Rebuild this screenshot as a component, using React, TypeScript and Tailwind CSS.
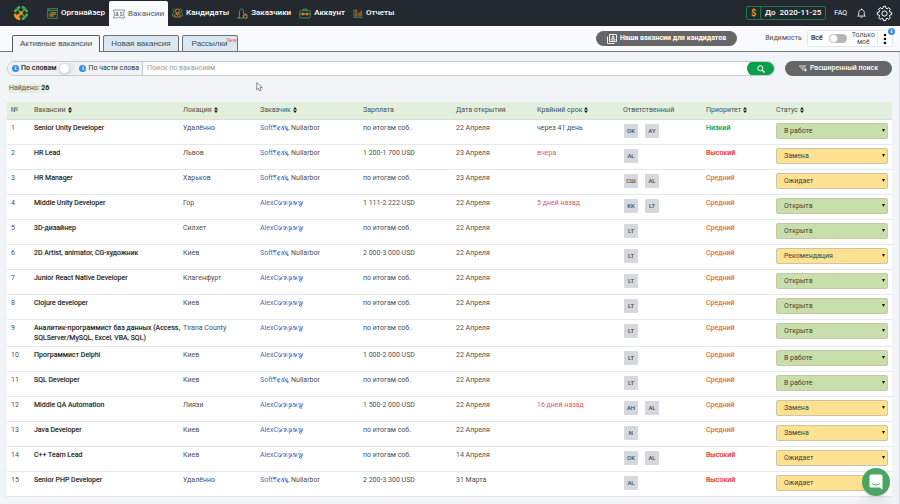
import { useState } from "react";
import type { ReactNode } from "react";

type Status = "В работе" | "Замена" | "Ожидает" | "Открыта" | "Рекомендация";
type Priority = "Низкий" | "Средний" | "Высокий";

type Vacancy = {
  title: string;
  location: string;
  client: "soft" | "alex";
  salary?: string;
  opened: string;
  deadline?: string;
  late?: boolean;
  people: string[];
  priority: Priority;
  status: Status;
};

const vacancies: Vacancy[] = [
  { title: "Senior Unity Developer", location: "Удалённо", client: "soft", opened: "22 Апреля", deadline: "через 41 день", people: ["OK", "AY"], priority: "Низкий", status: "В работе" },
  { title: "HR Lead", location: "Львов", client: "soft", salary: "1 200-1 700 USD", opened: "23 Апреля", deadline: "вчера", late: true, people: ["AL"], priority: "Высокий", status: "Замена" },
  { title: "HR Manager", location: "Харьков", client: "soft", opened: "23 Апреля", people: ["СШ", "AL"], priority: "Средний", status: "Ожидает" },
  { title: "Middle Unity Developer", location: "Гор", client: "alex", salary: "1 111-2 222 USD", opened: "22 Апреля", deadline: "5 дней назад", late: true, people: ["KK", "LT"], priority: "Средний", status: "Открыта" },
  { title: "3D-дизайнер", location: "Силхет", client: "alex", opened: "22 Апреля", people: ["LT"], priority: "Средний", status: "Открыта" },
  { title: "2D Artist, animator, CG-художник", location: "Киев", client: "soft", salary: "2 000-3 000 USD", opened: "22 Апреля", people: ["LT"], priority: "Средний", status: "Рекомендация" },
  { title: "Junior React Native Developer", location: "Клагенфурт", client: "alex", opened: "22 Апреля", people: ["LT"], priority: "Средний", status: "Открыта" },
  { title: "Clojure developer", location: "Киев", client: "alex", opened: "22 Апреля", people: ["LT"], priority: "Средний", status: "Открыта" },
  { title: "Аналитик-программист баз данных (Access, SQLServer/MySQL, Excel, VBA, SQL)", location: "Tirana County", client: "alex", opened: "22 Апреля", people: ["LT"], priority: "Средний", status: "Открыта" },
  { title: "Программист Delphi", location: "Киев", client: "alex", salary: "1 000-2 000 USD", opened: "22 Апреля", people: ["LT"], priority: "Средний", status: "В работе" },
  { title: "SQL Developer", location: "Киев", client: "soft", opened: "22 Апреля", people: ["LT"], priority: "Средний", status: "В работе" },
  { title: "Middle QA Automation", location: "Лиязи", client: "alex", salary: "1 500-2 000 USD", opened: "22 Апреля", deadline: "16 дней назад", late: true, people: ["AH", "AL"], priority: "Средний", status: "Замена" },
  { title: "Java Developer", location: "Киев", client: "alex", opened: "22 Апреля", people: ["N"], priority: "Средний", status: "Замена" },
  { title: "C++ Team Lead", location: "Киев", client: "alex", opened: "14 Апреля", people: ["OK", "AL"], priority: "Высокий", status: "Ожидает" },
  { title: "Senior PHP Developer", location: "Удалённо", client: "soft", salary: "2 200-3 300 USD", opened: "31 Марта", people: ["AL"], priority: "Высокий", status: "Ожидает" },
];

const statuses: Status[] = ["В работе", "Замена", "Ожидает", "Открыта", "Рекомендация"];

const statusColor: Record<Status, string> = {
  "В работе": "bg-[#c8dfac]",
  Открыта: "bg-[#c8dfac]",
  Замена: "bg-[#fee191]",
  Ожидает: "bg-[#fee191]",
  Рекомендация: "bg-[#fee191]",
};

const priorityColor: Record<Priority, string> = {
  Низкий: "text-[#0a9c4a] text-shadow-[0_0_1px_#6cc795]",
  Средний: "text-[#dc6c38] text-shadow-[0_0_1px_#f0b898]",
  Высокий: "text-[#f02a20] text-shadow-[0_0_1px_#f78a84]",
};

const columns = [
  { name: "№", width: "w-[23px]" },
  { name: "Вакансии", width: "w-[149px]", sortable: true },
  { name: "Локация", width: "w-[77px]", sortable: true },
  { name: "Заказчик", width: "w-[103px]", sortable: true },
  { name: "Зарплата", width: "w-[93px]" },
  { name: "Дата открытия", width: "w-[81px]" },
  { name: "Крайний срок", width: "w-[86px]", sortable: true },
  { name: "Ответственный", width: "w-[83px]" },
  { name: "Приоритет", width: "w-[70px]", sortable: true },
  { name: "Статус", width: "w-[120px]", sortable: true },
];

function Logo() {
  return (
    <svg viewBox="0 0 32 32" className="size-4" fill="none">
      <g stroke="#45b04f" strokeWidth="5">
        <path d="M17.500 4A12 12 0 0 1 23.500 7M25 8.500A12 12 0 0 1 28 14.500" />
        <path d="M28 17.500A12 12 0 0 1 25 23.500M23.500 25A12 12 0 0 1 17.500 28" />
        <path d="M4 14.500A12 12 0 0 1 7 8.500M8.500 7A12 12 0 0 1 14.500 4" />
      </g>
      <path d="M14.500 28A12 12 0 0 1 4 17.500" stroke="#f7941d" strokeWidth="5" />
      <path d="M7 7l6 6M25 7l-6 6M25 25l-6-6" stroke="#45b04f" strokeWidth="3" />
      <path d="M7 25l6-6" stroke="#f7941d" strokeWidth="6" />
      <circle cx="16" cy="16" r="4" fill="#f7941d" />
    </svg>
  );
}

function OrganizerIcon() {
  return (
    <svg viewBox="0 0 22 22" className="h-[11px] w-[11px]" fill="none" strokeWidth="1.600">
      <rect x="1.500" y="1.500" width="19" height="19" stroke="#3c8f45" strokeWidth="2" />
      <path d="M1.500 5h19" stroke="#3c8f45" strokeWidth="2" />
      <path d="M8 9h10M4 12.500h14M4 16h10M8 8v9M12 8v9M16 8v6" stroke="#b87a30" strokeWidth="1.800" />
    </svg>
  );
}

function VacancyIcon() {
  return (
    <svg viewBox="0 0 24 20" className="h-[10px] w-3" fill="none" stroke="#70767c" strokeWidth="1.500">
      <path d="M1 2h22v2.500l-1.500 1v9l1.500 1V18h-7l-1.500-1.500h-5L8 18H1v-2.500l1.500-1v-9L1 4.500z" />
      <circle cx="8" cy="8" r="1.800" />
      <path d="M5 13c0-3 6-3 6 0zM14 7h5M14 10h5M14 13h5" />
    </svg>
  );
}

function CandidatesIcon() {
  return (
    <svg viewBox="0 0 22 20" className="h-[10px] w-[11px]" fill="none" strokeWidth="1.700">
      <path d="M5 8a3 3 0 1 1 2-5M17 8a3 3 0 1 0-2-5M5 9c-3 0-4 3-4 7h4M17 9c3 0 4 3 4 7h-4" stroke="#3f9a48" />
      <circle cx="11" cy="6" r="4" stroke="#e08d2c" />
      <path d="M5 18c0-5 2-7 6-7s6 2 6 7zM9 12l2 3 2-3" stroke="#e08d2c" />
    </svg>
  );
}

function ClientsIcon() {
  return (
    <svg viewBox="0 0 22 22" className="h-[11px] w-[11px]" fill="none" strokeWidth="1.800">
      <path d="M1 20h4V8c0-4 1.500-6 4-6s4 2 4 6v4" stroke="#3f9a48" strokeWidth="2" />
      <path d="M1 20h11" stroke="#3f9a48" strokeWidth="2" />
      <path d="M13 14h7v6h-7zM15 14c0-4 3-4 3 0" stroke="#e08d2c" />
    </svg>
  );
}

function AccountIcon() {
  return (
    <svg viewBox="0 0 24 22" className="h-[11px] w-3" fill="none" strokeWidth="1.800">
      <path d="M8 5V2h8v3" stroke="#3f9a48" />
      <rect x="1.500" y="5" width="21" height="15" rx="3" stroke="#3f9a48" />
      <path d="M3 12h18" stroke="#e08d2c" />
      <circle cx="8" cy="12" r="2.200" stroke="#e08d2c" />
      <circle cx="16" cy="12" r="2.200" stroke="#e08d2c" />
    </svg>
  );
}

function ReportsIcon() {
  return (
    <svg viewBox="0 0 22 22" className="h-[11px] w-[10px]" fill="none" strokeWidth="1.700">
      <path d="M2 2v18h19" stroke="#3f9a48" />
      <path d="M5 17V3h3v14zM11 17v-7h3v7zM17 17V6h2v11z" stroke="#b8722a" />
    </svg>
  );
}

function BellIcon() {
  return (
    <svg viewBox="0 0 16 18" className="h-[10px] w-[9px]" fill="none" stroke="#fff" strokeWidth="1.500">
      <path d="M8 1v2M3 13V8.500C3 5 5 3 8 3s5 2 5 5.500V13l2 1.500H1zM6.500 16.500h3" />
    </svg>
  );
}

function GearIcon() {
  return (
    <svg viewBox="0 0 24 26" className="size-[17px]" fill="none" stroke="#fff" strokeWidth="1.500" strokeLinejoin="round">
      <path d="M10.300 2h3.400l.6 2.900 1.800.8 2.500-1.600 2.400 2.400-1.600 2.500.8 1.800 2.800.6v3.300l-2.800.6-.8 1.800 1.600 2.500-2.400 2.400-2.500-1.600-1.800.8-.6 2.800h-3.400l-.6-2.800-1.800-.8L5.400 22 3 19.600l1.600-2.500-.8-1.800L1 14.700v-3.300l2.800-.6.800-1.800L3 6.500l2.400-2.400 2.500 1.600 1.800-.8z" />
      <circle cx="12" cy="13" r="4" />
    </svg>
  );
}

function InfoDot() {
  return (
    <span className="flex size-[7px] shrink-0 items-center justify-center rounded-full bg-[#3b8de3] font-serif text-[6px] leading-none font-bold text-white">
      i
    </span>
  );
}

function SortIcon() {
  return (
    <svg viewBox="0 0 8 12" className="h-[6px] w-1" fill="#1c1f22">
      <path d="M4 0l4 5H0zM4 12l4-5H0z" />
    </svg>
  );
}

function NavItem({ icon, active, children }: { icon: ReactNode; active?: boolean; children: ReactNode }) {
  return (
    <a
      href="#"
      className={`flex items-center gap-[3px] px-1 text-[8px] ${
        active
          ? "mt-px rounded-t-xs bg-[#f8fafc] text-[#50565c]"
          : "font-medium text-white"
      }`}
    >
      {icon}
      {children}
    </a>
  );
}

function Header() {
  return (
    <header className="flex h-[26px] items-stretch justify-between bg-[#242930] pr-[7px] pl-[13px]">
      <nav className="flex items-stretch">
        <a href="#" aria-label="Главная" className="mr-[14px] flex items-center">
          <Logo />
        </a>
        <NavItem icon={<OrganizerIcon />}>Органайзер</NavItem>
        <NavItem icon={<VacancyIcon />} active>
          Вакансии
        </NavItem>
        <NavItem icon={<CandidatesIcon />}>Кандидаты</NavItem>
        <NavItem icon={<ClientsIcon />}>Заказчики</NavItem>
        <NavItem icon={<AccountIcon />}>Аккаунт</NavItem>
        <NavItem icon={<ReportsIcon />}>Отчеты</NavItem>
      </nav>
      <div className="flex items-center text-white">
        <div className="mr-2 flex h-[14px] items-stretch rounded-xs border border-[#167a45] text-[8px] leading-3 font-medium">
          <span className="w-[14px] border-r border-[#167a45] text-center text-[9px] font-bold text-[#f59a23]">$</span>
          <span className="px-1">До&nbsp; 2020-11-25</span>
        </div>
        <a href="#" className="mr-[10px] text-[7px]">
          FAQ
        </a>
        <button type="button" aria-label="Уведомления" className="mr-[10px]">
          <BellIcon />
        </button>
        <button type="button" aria-label="Настройки">
          <GearIcon />
        </button>
      </div>
    </header>
  );
}

function TabBar() {
  const [mine, setMine] = useState(false);

  return (
    <div className="flex h-[26px] items-end justify-between border-b border-[#777b80] bg-[#f8fafc] pr-[7px] pl-3">
      <nav className="-mb-px flex gap-[3px] font-['Liberation_Sans',sans-serif] text-[8px] leading-4 text-[#44494e]">
        <a href="#" className="rounded-t-xs border border-b-0 border-[#555a60] bg-[#f1f5f8] px-[7px]">
          Активные вакансии
        </a>
        <a href="#" className="rounded-t-xs border border-[#6a7076] bg-[#dce8f1] px-[7px] leading-[15px]">
          Новая вакансия
        </a>
        <a href="#" className="relative rounded-t-xs border border-[#6a7076] bg-[#dce8f1] px-[9px] leading-[15px]">
          Рассылки
          <sup className="absolute top-0 right-0 text-[5px] leading-[8px] text-[#f0443c]">New</sup>
        </a>
      </nav>
      <div className="flex items-center gap-7 self-center">
        <button
          type="button"
          className="flex h-[15px] items-center gap-[3px] rounded-full bg-[#666] px-[11px] text-[7px] font-bold text-white"
        >
          <svg viewBox="0 0 20 20" className="size-[10px]" fill="none" stroke="#fff" strokeWidth="1.800">
            <path d="M5 1h14v14H5zM1 5v14h14" />
            <circle cx="12" cy="6" r="2" />
            <path d="M8 12c0-4 8-4 8 0z" />
          </svg>
          Наши вакансии для кандидатов
        </button>
        <div className="flex items-center gap-[5px] text-[7px] text-[#4b5056]">
          <span>Видимость</span>
          <div className="relative flex h-[17px] items-center rounded-xs border border-[#e3e6ea] bg-white pr-[5px] pl-[3px]">
            <span className="text-[#222] text-shadow-[0_0_1px_#999]">Всё</span>
            <label className="mr-[5px] ml-[6px] flex">
              <input
                type="checkbox"
                aria-label="Только моё"
                checked={mine}
                onChange={(e) => setMine(e.target.checked)}
                className="peer sr-only"
              />
              <span className="h-[9px] w-[18px] rounded-full bg-[#b5b5b5] after:block after:size-[9px] after:rounded-full after:border after:border-[#ccc] after:bg-white peer-checked:after:ml-auto" />
            </label>
            <span className="flex flex-col items-center border-r border-[#e3e6ea] pr-[2px] text-[7px] leading-[7px]">
              <span>Только</span>
              <span>моё</span>
            </span>
            <button type="button" aria-label="Ещё" className="ml-[5px]">
              <svg viewBox="0 0 4 12" className="h-3 w-1" fill="#111">
                <circle cx="2" cy="2" r="1.300" />
                <circle cx="2" cy="6" r="1.300" />
                <circle cx="2" cy="10" r="1.300" />
              </svg>
            </button>
            <span className="absolute -top-[3px] -right-[3px]">
              <InfoDot />
            </span>
          </div>
        </div>
      </div>
    </div>
  );
}

function SearchBar() {
  const [partial, setPartial] = useState(false);

  return (
    <form className="flex gap-[10px]" onSubmit={(e) => e.preventDefault()}>
      <div className="flex h-[15px] flex-1 items-stretch overflow-hidden rounded-full border border-[#c6c9cc] bg-white">
        <div className="flex items-center gap-[2px] border-r border-[#c6c9cc] bg-[#f1f1f3] pr-[3px] pl-1 text-[7px] text-[#2c3034]">
          <InfoDot />
          <span className="text-[#111] text-shadow-[0_0_1px_#999]">По словам</span>
          <label className="mr-px ml-px flex">
            <input
              type="checkbox"
              aria-label="По части слова"
              checked={partial}
              onChange={(e) => setPartial(e.target.checked)}
              className="peer sr-only"
            />
            <span className="h-[11px] w-[17px] rounded-full bg-[#e9e9ec] after:block after:size-[11px] after:rounded-full after:border after:border-[#dcdce0] after:bg-white after:shadow-sm peer-checked:after:ml-auto" />
          </label>
          <InfoDot />
          <span>По части слова</span>
        </div>
        <input
          type="text"
          aria-label="Поиск по вакансиям"
          placeholder="Поиск по вакансиям"
          className="min-w-0 flex-1 px-1 text-[7px] outline-none placeholder:text-[#999]"
        />
        <button
          type="submit"
          aria-label="Найти"
          className="-my-px -mr-px flex w-[28px] items-center justify-center rounded-full bg-[#0aa04b]"
        >
          <svg viewBox="0 0 16 16" className="size-2" fill="none" stroke="#fff" strokeWidth="2">
            <circle cx="6.500" cy="6.500" r="5" />
            <path d="M10 10l5 5" strokeWidth="3" />
          </svg>
        </button>
      </div>
      <button
        type="button"
        className="flex h-[15px] w-[107px] items-center justify-center gap-[3px] rounded-full bg-[#666] text-[7px] font-medium text-white"
      >
        <svg viewBox="0 0 16 14" className="h-[7px] w-2" fill="none" stroke="#fff" strokeWidth="1.600">
          <path d="M0 2h14M3 6h9M6 10h4M13 7v6M10 10h6" />
        </svg>
        Расширенный поиск
      </button>
    </form>
  );
}

// part of the client's name is crossed out by hand
function Client({ kind }: { kind: Vacancy["client"] }) {
  if (kind === "soft") {
    return (
      <>
        <a href="#" className="relative text-[#4173b8]">
          SoftTech
          <svg viewBox="0 0 28 14" className="absolute top-0 right-0 h-2 w-4" fill="none" strokeWidth="1.500">
            <path d="M0 3l6 6 3-5 4 7 4-7 3 7 4-8 3 8" stroke="#fff" />
            <path d="M1 3l5 2M9 6l4 5M18 4l3 6M23 5l5 7" stroke="#3c8be8" strokeWidth="2" />
          </svg>
        </a>
        , Nullarbor
      </>
    );
  }
  return (
    <a href="#" className="relative text-[#4173b8]">
      AlexCompany
      <svg viewBox="0 0 46 14" className="absolute top-0 right-0 h-2 w-[26px]" fill="none" strokeWidth="1.500">
        <path d="M2 10L8 3l3 8 7-8 2 8 7-7 2 8 7-8 2 8 6-7" stroke="#fff" />
        <path d="M4 11l4-5M13 10l4-5M22 11l4-5M31 10l4-4M39 12l6-6" stroke="#3c8be8" strokeWidth="2" />
      </svg>
    </a>
  );
}

function VacancyRow({ vacancy, index }: { vacancy: Vacancy; index: number }) {
  const [status, setStatus] = useState<Status>(vacancy.status);

  return (
    <tr className="h-[25px] border-b border-[#e6e9eb] align-top">
      <td className="px-1 py-[3px]">{index + 1}</td>
      <td className="py-[3px] pl-1 text-[#111] text-shadow-[0_0_1px_#999]">
        <div className="-mr-1">{vacancy.title}</div>
      </td>
      <td className="px-1 py-[3px]">{vacancy.location}</td>
      <td className="px-1 py-[3px] whitespace-nowrap">
        <Client kind={vacancy.client} />
      </td>
      <td className="px-1 py-[3px]">{vacancy.salary ?? "по итогам соб."}</td>
      <td className="px-1 py-[3px]">{vacancy.opened}</td>
      <td className={`px-1 py-[3px] ${vacancy.late ? "text-[#d3605e]" : ""}`}>{vacancy.deadline}</td>
      <td className="px-[5px] pt-1">
        <div className="flex gap-[7px]">
          {vacancy.people.map((person) => (
            <span
              key={person}
              className="flex size-[14px] items-center justify-center rounded-[1px] bg-[#d5d9de] text-[6px] font-medium"
            >
              {person}
            </span>
          ))}
        </div>
      </td>
      <td className={`px-1 py-[3px] ${priorityColor[vacancy.priority]}`}>{vacancy.priority}</td>
      <td className="px-1 pt-[3px]">
        <div className="relative">
          <select
            aria-label={`Статус: ${vacancy.title}`}
            value={status}
            onChange={(e) => setStatus(e.target.value as Status)}
            className={`block h-4 w-full appearance-none rounded-xs border border-[#c9c7a8] px-[7px] text-[7px] text-[#3a3f33] ${statusColor[status]}`}
          >
            {statuses.map((name) => (
              <option key={name}>{name}</option>
            ))}
          </select>
          <svg viewBox="0 0 6 6" className="pointer-events-none absolute top-[6px] right-[3px] size-[3px]" fill="#111">
            <path d="M0 0h6L3 6z" />
          </svg>
        </div>
      </td>
    </tr>
  );
}

function VacancyTable() {
  return (
    <table className="w-full table-fixed border-collapse bg-white text-left text-[7px] leading-[10px] text-[#4a4f54]">
      <thead>
        <tr className="h-[17px] border-b border-[#d9e0d6] bg-[#e2efdc]">
          {columns.map((column) => (
            <th key={column.name} className={`px-1 font-normal whitespace-nowrap ${column.width}`}>
              <span className="flex items-center gap-[2px]">
                {column.name}
                {column.sortable && <SortIcon />}
              </span>
            </th>
          ))}
        </tr>
      </thead>
      <tbody>
        {vacancies.map((vacancy, index) => (
          <VacancyRow key={vacancy.title} vacancy={vacancy} index={index} />
        ))}
      </tbody>
    </table>
  );
}

export default function App() {
  return (
    <div className="flex min-h-screen flex-col bg-[#f1f5f8] font-[Roboto,'Liberation_Sans',sans-serif]">
      <Header />
      <TabBar />
      <main className="flex-1 border-r border-[#d3d8dc] pt-[9px] pr-[7px] pb-1 pl-[7px]">
        <SearchBar />
        <p className="mt-2 mb-[9px] ml-px w-fit rounded-xs bg-[#e4efdd] px-px text-[7px] leading-[9px] text-[#4a4f54]">
          Найдено: <b className="text-[#222]">26</b>
        </p>
        <VacancyTable />
      </main>
      <svg viewBox="0 0 12 18" className="pointer-events-none absolute top-[82px] left-[256px] h-[10px] w-[7px]" fill="#fff" stroke="#555" strokeWidth="1.200">
        <path d="M1 1v13l3-3 2 5 3-1-2-5h4z" />
      </svg>
      <button
        type="button"
        aria-label="Чат"
        className="fixed right-[10px] bottom-[8px] flex size-7 items-center justify-center rounded-full bg-[#4ba464] shadow-lg"
      >
        <svg viewBox="0 0 28 32" className="h-4 w-[14px]">
          <path d="M4 1h20a3 3 0 0 1 3 3v27l-6-4H4a3 3 0 0 1-3-3V4a3 3 0 0 1 3-3z" fill="#fff" />
          <path d="M6 19c5 4 11 4 16 0" fill="none" stroke="#4ba464" strokeWidth="2" strokeLinecap="round" />
        </svg>
      </button>
    </div>
  );
}
